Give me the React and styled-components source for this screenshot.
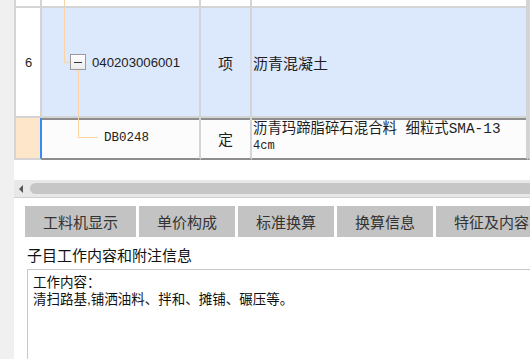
import React from "react";
import styled, { createGlobalStyle, css } from "styled-components";

const GlobalStyle = createGlobalStyle`
  html, body {
    margin: 0;
    padding: 0;
    width: 530px;
    height: 359px;
    overflow: hidden;
    background: #ffffff;
  }
  body {
    font-family: "Noto Sans CJK SC", "Liberation Sans", sans-serif;
    color: #1e1e1e;
  }
`;

const Page = styled.div`
  display: flex;
  width: 530px;
  height: 359px;
  overflow: hidden;
`;

const SideStrip = styled.div`
  width: 14px;
  flex: none;
  background: #f0f0f0;
`;

const Main = styled.div`
  flex: 1;
  min-width: 0;
  display: flex;
  flex-direction: column;
  background: #ffffff;
`;

const Grid = styled.div`
  display: grid;
  grid-template-columns: 28px 159px 51px 276px 1fr;
  grid-template-rows: 8px 110px 42px;
`;

const Cell = styled.div`
  position: relative;
  box-sizing: border-box;
  border-right: 2px solid #d4d4d4;
  border-bottom: 2px solid #d4d4d4;
  background: ${(p) => p.$bg || "#ffffff"};
  display: flex;
  align-items: center;
  overflow: hidden;
  ${(p) =>
    p.$current &&
    css`
      border-bottom: 2px solid #8d8d8d;
      box-shadow: inset 0 2px 0 #8d8d8d;
    `}
`;

const NumCell = styled(Cell)`
  border-left: 2px solid #d4d4d4;
  padding-left: 9px;
  font-family: "Liberation Sans", sans-serif;
  font-size: 13px;
  ${(p) =>
    p.$active &&
    css`
      border-right: 2px solid #3a8bf0;
    `}
`;

const CodeCell = styled(Cell)`
  padding-left: ${(p) => p.$indent || 0}px;
  gap: 6px;
`;

const CodeText = styled.span`
  font-family: "Liberation Sans", sans-serif;
  font-size: 13.2px;
  color: #222;
`;

const RationText = styled.span`
  font-family: "Liberation Mono", monospace;
  font-size: 12.5px;
  color: #222;
`;

const UnitCell = styled(Cell)`
  justify-content: center;
  font-size: 15px;
`;

const NameCell = styled(Cell)`
  padding-left: 1px;
  font-size: 15px;
  ${(p) =>
    p.$multi &&
    css`
      align-items: flex-start;
      flex-direction: column;
      padding-top: 2px;
      font-family: "Liberation Mono", "Noto Sans CJK SC", monospace;
      font-size: 14.4px;
      line-height: 18px;
    `}
`;

const SmallLine = styled.span`
  font-family: "Liberation Mono", monospace;
  font-size: 12px;
  line-height: 16px;
`;

const TreeLine = styled.span`
  position: absolute;
  left: ${(p) => p.$x}px;
  top: ${(p) => p.$y}px;
  width: ${(p) => p.$w || 1}px;
  height: ${(p) => (p.$h === undefined ? "100%" : `${p.$h}px`)};
  ${(p) => p.$toBottom && "bottom: 0; height: auto;"}
  background: #fcd3a2;
`;

const Toggle = styled.span`
  position: relative;
  box-sizing: border-box;
  width: 16px;
  height: 16px;
  flex: none;
  border: 1px solid #9a9a9a;
  background: linear-gradient(#ffffff, #ececec);
  &::after {
    content: "";
    position: absolute;
    left: 3px;
    right: 3px;
    top: 7px;
    height: 1px;
    background: #333;
  }
`;

const Spacer = styled.div`
  height: 20px;
`;

const HScroll = styled.div`
  position: relative;
  height: 17px;
  background: #e8e8e8;
  border-bottom: 1px solid #cfcfcf;
  display: flex;
  align-items: center;
  padding-left: 5px;
  gap: 7px;
`;

const ArrowLeft = styled.span`
  width: 0;
  height: 0;
  border-top: 4px solid transparent;
  border-bottom: 4px solid transparent;
  border-right: 4px solid #555;
`;

const Thumb = styled.span`
  flex: 1;
  height: 11px;
  border-radius: 6px 0 0 6px;
  background: #c6c6c6;
`;

const Tabs = styled.div`
  display: flex;
  gap: 3px;
  margin-top: 8px;
  padding-left: 11px;
`;

const Tab = styled.div`
  flex: none;
  height: 31px;
  line-height: 31px;
  padding: 0 18px;
  background: #c3c3c3;
  color: #333333;
  font-size: 15px;
  white-space: nowrap;
`;

const NoteTitle = styled.div`
  margin-top: 8px;
  padding-left: 13px;
  font-size: 15px;
  line-height: 20px;
  color: #111;
`;

const NoteBox = styled.div`
  flex: 1;
  margin: 4px 0 0 13px;
  border: 1px solid #c8c8c8;
  border-right: none;
  border-bottom: none;
  padding: 4px 5px;
  color: #111;
`;

const NoteLine = styled.div`
  height: 17px;
  font-family: "Liberation Sans", "Noto Sans CJK SC", sans-serif;
  font-size: 13.5px;
  line-height: 17px;
  white-space: nowrap;
`;

const tabs = ["工料机显示", "单价构成", "标准换算", "换算信息", "特征及内容"];

export default function App() {
  return (
    <>
      <GlobalStyle />
      <Page>
        <SideStrip />
        <Main>
          <Grid>
            <NumCell />
            <CodeCell>
              <TreeLine $x={22} $y={0} />
            </CodeCell>
            <UnitCell />
            <NameCell />
            <Cell />

            <NumCell>6</NumCell>
            <CodeCell $bg="#dce8fc" $indent={28}>
              <TreeLine $x={22} $y={0} $h={54} />
              <TreeLine $x={22} $y={54} $w={6} $h={1} />
              <TreeLine $x={36} $y={62} $toBottom />
              <Toggle />
              <CodeText>040203006001</CodeText>
            </CodeCell>
            <UnitCell $bg="#dce8fc">项</UnitCell>
            <NameCell $bg="#dce8fc">沥青混凝土</NameCell>
            <Cell $bg="#dce8fc" />

            <NumCell $bg="#fde6c9" $active />
            <CodeCell $bg="#fcfcfc" $current $indent={62}>
              <TreeLine $x={36} $y={0} $h={19} />
              <TreeLine $x={36} $y={19} $w={20} $h={1} />
              <RationText>DB0248</RationText>
            </CodeCell>
            <UnitCell $bg="#fcfcfc" $current>定</UnitCell>
            <NameCell $bg="#fcfcfc" $current $multi>
              <span>沥青玛蹄脂碎石混合料 细粒式SMA-13</span>
              <SmallLine>4cm</SmallLine>
            </NameCell>
            <Cell $bg="#fcfcfc" $current />
          </Grid>
          <Spacer />
          <HScroll>
            <ArrowLeft />
            <Thumb />
          </HScroll>
          <Tabs>
            {tabs.map((t) => (
              <Tab key={t}>{t}</Tab>
            ))}
          </Tabs>
          <NoteTitle>子目工作内容和附注信息</NoteTitle>
          <NoteBox>
            <NoteLine>工作内容：</NoteLine>
            <NoteLine>清扫路基,铺洒油料、拌和、摊铺、碾压等。</NoteLine>
          </NoteBox>
        </Main>
      </Page>
    </>
  );
}
